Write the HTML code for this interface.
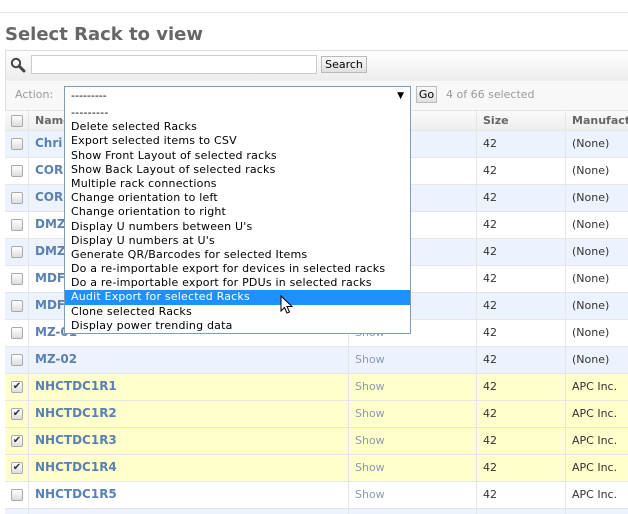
<!DOCTYPE html>
<html><head><style>
*{box-sizing:border-box;margin:0;padding:0}
html,body{width:628px;height:514px;overflow:hidden}
body{background:#fff;font-family:"DejaVu Sans",Verdana,sans-serif;font-size:11px;color:#333;position:relative}
.abs{position:absolute}
.topline{left:0;top:12px;width:628px;height:1px;background:#e8e8e8}
h1{position:absolute;left:5px;top:24px;font-size:18px;font-weight:bold;color:#666;font-family:"DejaVu Sans",Verdana,sans-serif}
.bar1{left:5px;top:50px;width:623px;height:30px;background:linear-gradient(#fff,#ececec);border-left:1px solid #ddd;border-top:1px solid #ddd}
.bar2{left:5px;top:80px;width:623px;height:30px;background:#f8f8f8;border-left:1px solid #ddd;border-top:1px solid #eee}
.chk{position:absolute;width:12px;height:12px;border:1px solid #aaa;border-radius:2px;background:linear-gradient(#fff,#ddd)}
.row{position:absolute;left:5px;width:623px;height:27px;border-top:1px solid #e6e6e6}
.row .c1{position:absolute;left:0;width:24px;height:27px;border-right:1px solid #e6e6e6}
.row .c2{position:absolute;left:24px;width:320px;height:27px;border-right:1px solid #e6e6e6}
.row .c3{position:absolute;left:344px;width:128px;height:27px;border-right:1px solid #e6e6e6}
.row .c4{position:absolute;left:472px;width:89px;height:27px;border-right:1px solid #e6e6e6}
.nm{position:absolute;left:30px;top:5px;font-weight:bold;font-size:12px;color:#5b80b2}
.sh{position:absolute;left:350px;top:6px;color:#8a9ab2}
.sz{position:absolute;left:478px;top:6px}
.mf{position:absolute;left:567px;top:6px;white-space:nowrap}
.blue{background:#edf3fe}.yel{background:#ffffcc}.wht{background:#fff}
.dd{left:64px;top:104px;width:347px;height:230px;background:#fff;border:1px solid #7f9db9;border-top:none;padding-top:2px}
.dd div{height:14.2px;line-height:14.2px;padding-left:6px;font-size:11px;color:#000;white-space:nowrap;letter-spacing:0.2px}
.dd .hl{background:#1e90ff;color:#fff}
</style></head><body>
<div class="abs topline"></div>
<h1>Select Rack to view</h1>
<div class="abs bar1"></div>
<svg class="abs" style="left:10px;top:57px" width="16" height="16" viewBox="0 0 16 16"><circle cx="6" cy="6" r="4.2" fill="none" stroke="#444" stroke-width="2"/><line x1="9" y1="9" x2="14" y2="14" stroke="#444" stroke-width="3" stroke-linecap="round"/></svg>
<div class="abs" style="left:31px;top:55px;width:286px;height:19px;border:1px solid #ccc;background:#fff"></div>
<div class="abs" style="left:321px;top:56px;width:46px;height:17px;border:1px solid #bbb;background:linear-gradient(#fafafa,#e0e0e0);font-size:11px;line-height:15px;text-align:center;color:#000">Search</div>
<div class="abs bar2"></div>
<div class="abs" style="left:15px;top:88px;color:#999">Action:</div>
<div class="abs" style="left:64px;top:86px;width:347px;height:19px;border:1px solid #7f9db9;background:#fff;padding-left:6px;line-height:18px;color:#000">---------<span style="position:absolute;right:6px;top:0;font-size:9px">▼</span></div>
<div class="abs" style="left:416px;top:86px;width:21px;height:17px;border:1px solid #bbb;background:linear-gradient(#fafafa,#e0e0e0);line-height:15px;text-align:center;color:#000">Go</div>
<div class="abs" style="left:446px;top:88px;color:#999">4 of 66 selected</div>

<div class="row" style="top:110px;height:20px;background:linear-gradient(#fafafa,#eee)"><div class="c1" style="height:20px"></div><div class="c2" style="height:20px"></div><div class="c3" style="height:20px"></div><div class="c4" style="height:20px"></div>
<span class="chk" style="left:6px;top:4px"></span><span style="position:absolute;left:30px;top:3px;font-weight:bold;color:#666">Name</span><span style="position:absolute;left:478px;top:3px;font-weight:bold;color:#666">Size</span><span style="position:absolute;left:567px;top:3px;font-weight:bold;color:#666">Manufact</span></div>

<div class="row blue" style="top:130px"><div class="c1"></div><div class="c2"></div><div class="c3"></div><div class="c4"></div><span class="chk" style="left:6px;top:7px"></span><span class="nm">Chri</span><span class="sz">42</span><span class="mf">(None)</span></div>
<div class="row wht" style="top:157px"><div class="c1"></div><div class="c2"></div><div class="c3"></div><div class="c4"></div><span class="chk" style="left:6px;top:7px"></span><span class="nm">COR</span><span class="sz">42</span><span class="mf">(None)</span></div>
<div class="row blue" style="top:184px"><div class="c1"></div><div class="c2"></div><div class="c3"></div><div class="c4"></div><span class="chk" style="left:6px;top:7px"></span><span class="nm">COR</span><span class="sz">42</span><span class="mf">(None)</span></div>
<div class="row wht" style="top:211px"><div class="c1"></div><div class="c2"></div><div class="c3"></div><div class="c4"></div><span class="chk" style="left:6px;top:7px"></span><span class="nm">DMZ</span><span class="sz">42</span><span class="mf">(None)</span></div>
<div class="row blue" style="top:238px"><div class="c1"></div><div class="c2"></div><div class="c3"></div><div class="c4"></div><span class="chk" style="left:6px;top:7px"></span><span class="nm">DMZ</span><span class="sz">42</span><span class="mf">(None)</span></div>
<div class="row wht" style="top:265px"><div class="c1"></div><div class="c2"></div><div class="c3"></div><div class="c4"></div><span class="chk" style="left:6px;top:7px"></span><span class="nm">MDF</span><span class="sz">42</span><span class="mf">(None)</span></div>
<div class="row blue" style="top:292px"><div class="c1"></div><div class="c2"></div><div class="c3"></div><div class="c4"></div><span class="chk" style="left:6px;top:7px"></span><span class="nm">MDF</span><span class="sz">42</span><span class="mf">(None)</span></div>
<div class="row wht" style="top:319px"><div class="c1"></div><div class="c2"></div><div class="c3"></div><div class="c4"></div><span class="chk" style="left:6px;top:7px"></span><span class="nm">MZ-01</span><span class="sh">Show</span><span class="sz">42</span><span class="mf">(None)</span></div>
<div class="row blue" style="top:346px"><div class="c1"></div><div class="c2"></div><div class="c3"></div><div class="c4"></div><span class="chk" style="left:6px;top:7px"></span><span class="nm">MZ-02</span><span class="sh">Show</span><span class="sz">42</span><span class="mf">(None)</span></div>
<div class="row yel" style="top:373px"><div class="c1"></div><div class="c2"></div><div class="c3"></div><div class="c4"></div><span class="chk" style="left:6px;top:7px;font-size:10px;line-height:10px;text-align:center">✔</span><span class="nm">NHCTDC1R1</span><span class="sh">Show</span><span class="sz">42</span><span class="mf">APC Inc.</span></div>
<div class="row yel" style="top:400px"><div class="c1"></div><div class="c2"></div><div class="c3"></div><div class="c4"></div><span class="chk" style="left:6px;top:7px;font-size:10px;line-height:10px;text-align:center">✔</span><span class="nm">NHCTDC1R2</span><span class="sh">Show</span><span class="sz">42</span><span class="mf">APC Inc.</span></div>
<div class="row yel" style="top:427px"><div class="c1"></div><div class="c2"></div><div class="c3"></div><div class="c4"></div><span class="chk" style="left:6px;top:7px;font-size:10px;line-height:10px;text-align:center">✔</span><span class="nm">NHCTDC1R3</span><span class="sh">Show</span><span class="sz">42</span><span class="mf">APC Inc.</span></div>
<div class="row yel" style="top:454px"><div class="c1"></div><div class="c2"></div><div class="c3"></div><div class="c4"></div><span class="chk" style="left:6px;top:7px;font-size:10px;line-height:10px;text-align:center">✔</span><span class="nm">NHCTDC1R4</span><span class="sh">Show</span><span class="sz">42</span><span class="mf">APC Inc.</span></div>
<div class="row wht" style="top:481px"><div class="c1"></div><div class="c2"></div><div class="c3"></div><div class="c4"></div><span class="chk" style="left:6px;top:7px"></span><span class="nm">NHCTDC1R5</span><span class="sh">Show</span><span class="sz">42</span><span class="mf">APC Inc.</span></div>
<div class="row blue" style="top:508px;height:6px"><div class="c1" style="height:6px"></div><div class="c2" style="height:6px"></div><div class="c3" style="height:6px"></div><div class="c4" style="height:6px"></div></div>

<div class="abs dd">
<div>---------</div>
<div>Delete selected Racks</div>
<div>Export selected items to CSV</div>
<div>Show Front Layout of selected racks</div>
<div>Show Back Layout of selected racks</div>
<div>Multiple rack connections</div>
<div>Change orientation to left</div>
<div>Change orientation to right</div>
<div>Display U numbers between U's</div>
<div>Display U numbers at U's</div>
<div>Generate QR/Barcodes for selected Items</div>
<div>Do a re-importable export for devices in selected racks</div>
<div>Do a re-importable export for PDUs in selected racks</div>
<div class="hl">Audit Export for selected Racks</div>
<div>Clone selected Racks</div>
<div>Display power trending data</div>
</div>
<svg class="abs" style="left:280px;top:295px" width="14" height="20" viewBox="0 0 14 20"><path d="M1 1 L1 16 L4.5 12.5 L7 18 L9.5 17 L7 11.5 L12 11.5 Z" fill="#fff" stroke="#000" stroke-width="1"/></svg>
</body></html>
